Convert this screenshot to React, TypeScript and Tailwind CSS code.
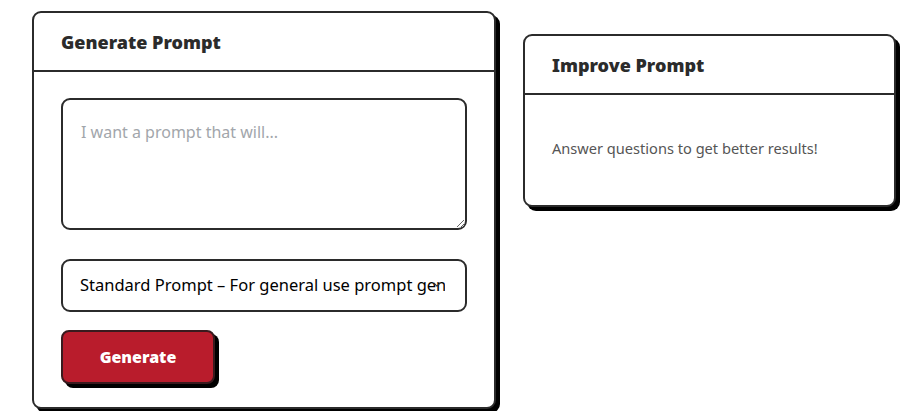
import { useState } from "react"

const Card = ({ title, children, className }: { title: string; children: React.ReactNode; className?: string }) => (
  <section
    className={`flex flex-col rounded-[9px] border-2 border-[#2b2b2b] bg-white shadow-[4px_4px_0_#000] ${className ?? ""}`}
  >
    <header className="flex h-[59px] shrink-0 items-center border-b-2 border-[#2b2b2b] px-[27px] pt-[1px]">
      <h2 className="text-[18px] font-black text-[#2b2b2b] [font-family:'Noto_Sans',sans-serif]">{title}</h2>
    </header>
    {children}
  </section>
)

const App = () => {
  const [prompt, setPrompt] = useState("")
  const [mode, setMode] = useState("standard")

  return (
    <main className="min-h-screen bg-white pl-[32px] pt-[11px] [font-family:'Noto_Sans','Open_Sans',sans-serif]">
      <div className="flex items-start gap-[27px]">
        <Card title="Generate Prompt" className="h-[398px] w-[464px]">
          <div className="flex flex-col px-[27px] pt-[26px]">
            <textarea
              value={prompt}
              onChange={(e) => setPrompt(e.target.value)}
              placeholder="I want a prompt that will..."
              className="h-[132px] w-full rounded-[9px] border-2 border-[#2b2b2b] px-[18px] pt-[20px] text-[16px] text-black outline-none placeholder:text-[#a2a6ab]"
            />
            <div className="relative mt-[29px]">
              <select
                value={mode}
                onChange={(e) => setMode(e.target.value)}
                className="h-[53px] w-full appearance-none rounded-[9px] border-2 border-[#2b2b2b] pl-[17px] pr-[20px] text-[16.5px] text-black outline-none"
              >
                <option value="standard">Standard Prompt – For general use prompt generation</option>
                <option value="reasoning">Reasoning Prompt – For step-by-step thinking</option>
              </select>
              <svg
                viewBox="0 0 10 6"
                className="pointer-events-none absolute right-[26px] top-[23px] h-[5px] w-[8px]"
                fill="none"
                stroke="#333"
                strokeWidth="1.4"
              >
                <path d="M1 1l4 4 4-4" />
              </svg>
            </div>
            <button className="mt-[18px] h-[54px] w-[154px] rounded-[8px] border-2 border-[#3a1a1e] bg-[#b91c2c] text-[16px] font-black text-white shadow-[4px_4px_0_#000] [font-family:'Noto_Sans',sans-serif]">
              Generate
            </button>
          </div>
        </Card>

        <Card title="Improve Prompt" className="mt-[23px] h-[173px] w-[373px]">
          <div className="flex flex-1 items-center px-[27px] pb-[2px]">
            <p className="text-[14.6px] text-[#555]">Answer questions to get better results!</p>
          </div>
        </Card>
      </div>
    </main>
  )
}

export default App
